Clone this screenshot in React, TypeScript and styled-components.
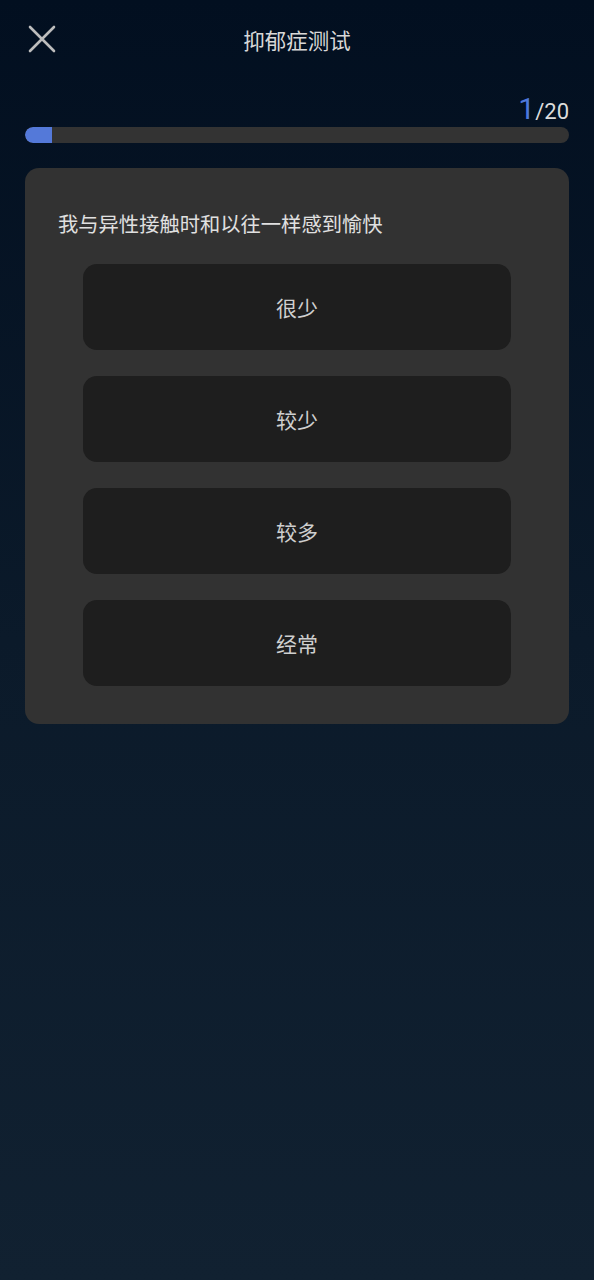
import React from 'react'
import styled, { createGlobalStyle } from 'styled-components'

const GlobalStyle = createGlobalStyle`
  html, body {
    margin: 0;
    padding: 0;
  }
  body {
    font-family: "Noto Sans CJK SC", "Noto Sans", sans-serif;
    background: #0b1828;
  }
`

const Page = styled.div`
  min-height: 1280px;
  box-sizing: border-box;
  background: linear-gradient(180deg, #020f20 0%, #0b1a2a 50%, #112131 100%);
  padding: 0 25px;
  display: flex;
  flex-direction: column;
`

const Header = styled.header`
  height: 78px;
  display: grid;
  grid-template-columns: 40px 1fr 40px;
  align-items: center;
`

const CloseButton = styled.button`
  width: 34px;
  height: 34px;
  padding: 0;
  border: none;
  background: none;
  display: flex;
  align-items: center;
  justify-content: center;
`

const Title = styled.h1`
  margin: 0;
  text-align: center;
  font-size: 21.5px;
  font-weight: 400;
  color: #d8d8d8;
`

const Counter = styled.div`
  display: flex;
  justify-content: flex-end;
  align-items: baseline;
  margin-top: 11px;
  height: 38px;
  color: #dcdcdc;
  font-family: Roboto, "Noto Sans", sans-serif;
`

const Current = styled.span`
  font-size: 30px;
  color: #4f78dc;
  line-height: 40px;
`

const Total = styled.span`
  font-size: 22px;
  line-height: 40px;
`

const Track = styled.div`
  height: 16px;
  border-radius: 8px;
  background: #333333;
  overflow: hidden;
`

const Fill = styled.div`
  height: 100%;
  background: #5479d9;
  border-radius: 8px 0 0 8px;
`

const Card = styled.section`
  margin-top: 25px;
  background: #323232;
  border-radius: 14px;
  padding: 40px 33px 38px;
  display: flex;
  flex-direction: column;
`

const Question = styled.p`
  margin: 0 0 25px;
  font-size: 20.3px;
  line-height: 31px;
  color: #e0e0e0;
`

const Options = styled.div`
  display: flex;
  flex-direction: column;
  gap: 26px;
  padding: 0 25px;
`

const Option = styled.button`
  height: 86px;
  border: none;
  border-radius: 14px;
  background: #1e1e1e;
  color: #cfcfcf;
  font-family: "Noto Sans CJK SC", "Noto Sans", sans-serif;
  font-size: 21px;
  cursor: pointer;
`

const options = ['很少', '较少', '较多', '经常']
const current = 1
const total = 20

export default function App() {
  return (
    <>
      <GlobalStyle />
      <Page>
        <Header>
          <CloseButton aria-label="关闭">
            <svg width="28" height="28" viewBox="0 0 28 28" fill="none">
              <path d="M2 2L26 26M26 2L2 26" stroke="#bdbdbd" strokeWidth="2.6" strokeLinecap="round" />
            </svg>
          </CloseButton>
          <Title>抑郁症测试</Title>
          <span />
        </Header>
        <Counter>
          <Current>{current}</Current>
          <Total>/{total}</Total>
        </Counter>
        <Track>
          <Fill style={{ width: `${(current / total) * 100}%` }} />
        </Track>
        <Card>
          <Question>我与异性接触时和以往一样感到愉快</Question>
          <Options>
            {options.map((label) => (
              <Option key={label}>{label}</Option>
            ))}
          </Options>
        </Card>
      </Page>
    </>
  )
}
